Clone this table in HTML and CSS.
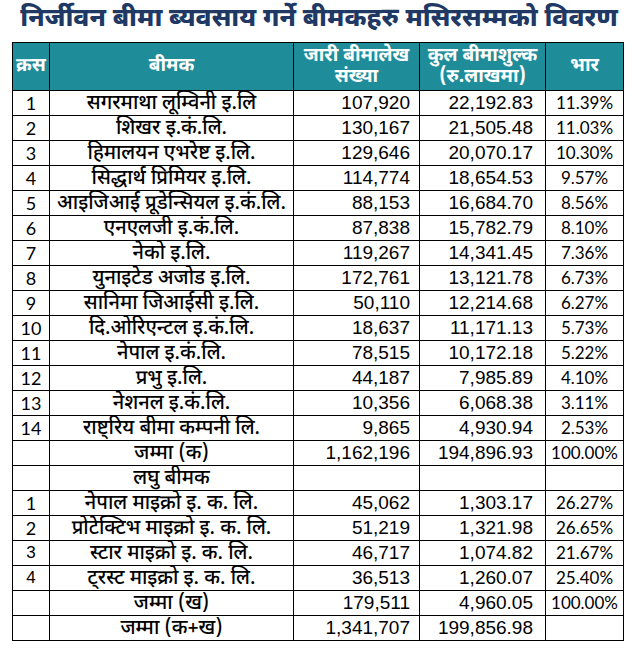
FILE: index.html
```html
<!DOCTYPE html>
<html lang="ne">
<head>
<meta charset="utf-8">
<title>निर्जीवन बीमा</title>
<link rel="stylesheet" href="styles.css">
</head>
<body>
<h1 class="title">निर्जीवन बीमा ब्यवसाय गर्ने बीमकहरु मसिरसम्मको विवरण</h1>
<table class="data">
  <colgroup>
    <col class="c-sn"><col class="c-name"><col class="c-num"><col class="c-num"><col class="c-pct">
  </colgroup>
  <thead>
    <tr>
      <th>क्रस</th>
      <th>बीमक</th>
      <th><span class="hl">जारी बीमालेख</span><span class="hl">संख्या</span></th>
      <th><span class="hl">कुल बीमाशुल्क</span><span class="hl">(रु.लाखमा)</span></th>
      <th>भार</th>
    </tr>
  </thead>
  <tbody>
    <tr><td class="sn">1</td><td class="name">सगरमाथा लूम्विनी इ.लि</td><td class="num">107,920</td><td class="num">22,192.83</td><td class="pct">11.39%</td></tr>
    <tr><td class="sn">2</td><td class="name">शिखर इ.कं.लि.</td><td class="num">130,167</td><td class="num">21,505.48</td><td class="pct">11.03%</td></tr>
    <tr><td class="sn">3</td><td class="name">हिमालयन एभरेष्ट इ.लि.</td><td class="num">129,646</td><td class="num">20,070.17</td><td class="pct">10.30%</td></tr>
    <tr><td class="sn">4</td><td class="name">सिद्धार्थ प्रिमियर इ.लि.</td><td class="num">114,774</td><td class="num">18,654.53</td><td class="pct">9.57%</td></tr>
    <tr><td class="sn">5</td><td class="name">आइजिआई प्रूडेन्सियल इ.कं.लि.</td><td class="num">88,153</td><td class="num">16,684.70</td><td class="pct">8.56%</td></tr>
    <tr><td class="sn">6</td><td class="name">एनएलजी इ.कं.लि.</td><td class="num">87,838</td><td class="num">15,782.79</td><td class="pct">8.10%</td></tr>
    <tr><td class="sn">7</td><td class="name">नेको इ.लि.</td><td class="num">119,267</td><td class="num">14,341.45</td><td class="pct">7.36%</td></tr>
    <tr><td class="sn">8</td><td class="name">युनाइटेड अजोड इ.लि.</td><td class="num">172,761</td><td class="num">13,121.78</td><td class="pct">6.73%</td></tr>
    <tr><td class="sn">9</td><td class="name">सानिमा जिआईसी इ.लि.</td><td class="num">50,110</td><td class="num">12,214.68</td><td class="pct">6.27%</td></tr>
    <tr><td class="sn">10</td><td class="name">दि.ओरिएन्टल इ.कं.लि.</td><td class="num">18,637</td><td class="num">11,171.13</td><td class="pct">5.73%</td></tr>
    <tr><td class="sn">11</td><td class="name">नेपाल इ.कं.लि.</td><td class="num">78,515</td><td class="num">10,172.18</td><td class="pct">5.22%</td></tr>
    <tr><td class="sn">12</td><td class="name">प्रभु इ.लि.</td><td class="num">44,187</td><td class="num">7,985.89</td><td class="pct">4.10%</td></tr>
    <tr><td class="sn">13</td><td class="name">नेशनल इ.कं.लि.</td><td class="num">10,356</td><td class="num">6,068.38</td><td class="pct">3.11%</td></tr>
    <tr><td class="sn">14</td><td class="name">राष्ट्रिय बीमा कम्पनी लि.</td><td class="num">9,865</td><td class="num">4,930.94</td><td class="pct">2.53%</td></tr>
    <tr><td class="sn"></td><td class="name">जम्मा (क)</td><td class="num">1,162,196</td><td class="num">194,896.93</td><td class="pct">100.00%</td></tr>
    <tr><td class="sn"></td><td class="name">लघु बीमक</td><td class="num"></td><td class="num"></td><td class="pct"></td></tr>
    <tr><td class="sn">1</td><td class="name">नेपाल माइक्रो इ. क. लि.</td><td class="num">45,062</td><td class="num">1,303.17</td><td class="pct">26.27%</td></tr>
    <tr><td class="sn">2</td><td class="name">प्रोटेक्टिभ माइक्रो इ. क. लि.</td><td class="num">51,219</td><td class="num">1,321.98</td><td class="pct">26.65%</td></tr>
    <tr><td class="sn alt">3</td><td class="name">स्टार माइक्रो इ. क. लि.</td><td class="num">46,717</td><td class="num">1,074.82</td><td class="pct">21.67%</td></tr>
    <tr><td class="sn alt">4</td><td class="name">ट्रस्ट माइक्रो इ. क. लि.</td><td class="num">36,513</td><td class="num">1,260.07</td><td class="pct">25.40%</td></tr>
    <tr><td class="sn"></td><td class="name">जम्मा (ख)</td><td class="num">179,511</td><td class="num">4,960.05</td><td class="pct">100.00%</td></tr>
    <tr><td class="sn"></td><td class="name">जम्मा (क+ख)</td><td class="num">1,341,707</td><td class="num">199,856.98</td><td class="pct"></td></tr>
  </tbody>
</table>
</body>
</html>
```

FILE: styles.css
```css
body {
  margin: 0;
  background: #ffffff;
  color: #000000;
  font-family: "Noto Sans Devanagari", "Lohit Devanagari", "Noto Sans", sans-serif;
}

.title {
  margin: 0;
  height: 42px;
  line-height: 40px;
  text-align: center;
  font-size: 26px;
  font-weight: 800;
  color: #203864;
  white-space: nowrap;
}

.data {
  margin-left: 12px;
  width: 611px;
  border-collapse: collapse;
  table-layout: fixed;
  border: 1.5px solid #000;
}

.c-sn { width: 37px; }
.c-name { width: 244px; }
.c-num { width: 126px; }
.c-pct { width: 78px; }

.data th {
  height: 47px;
  padding: 0;
  background: #1f8c99;
  color: #ffffff;
  font-size: 19px;
  font-weight: 700;
  line-height: 22px;
  text-align: center;
  border: 1px solid #000;
}

.hl {
  display: block;
  height: 21px;
  line-height: 21px;
  overflow: visible;
}

.data td {
  height: 24px;
  padding: 0;
  border: 1px solid #000;
  font-size: 18px;
  line-height: 24px;
  white-space: nowrap;
  overflow: hidden;
}

.sn {
  text-align: center;
  font-family: Lato, "Liberation Sans", sans-serif;
  font-size: 18px;
}

.sn.alt {
  font-family: "Liberation Sans", Arial, sans-serif;
  font-size: 17px;
}

.data td.name {
  text-align: center;
  font-size: 20px;
  font-weight: 500;
  height: 21px;
  padding-top: 3px;
  line-height: 21px;
}

.data td.num {
  text-align: right;
  padding-right: 9px;
  font-family: "Liberation Sans", Arial, sans-serif;
  font-size: 19px;
}

.data td.num + td.num {
  padding-right: 12px;
}

.data td.pct {
  text-align: center;
  font-family: Lato, "Liberation Sans", sans-serif;
  font-size: 17px;
}
```
